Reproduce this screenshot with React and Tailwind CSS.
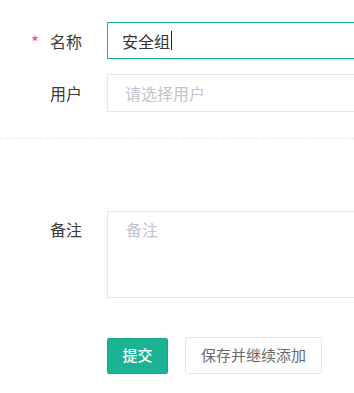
import React from 'react';

const font = { fontFamily: '"Noto Sans CJK SC", "Noto Sans", sans-serif' };

const Label = ({ children, required }) => (
  <div className="w-[82px] shrink-0 flex items-center justify-end text-[16px] text-[#3a3a3a]">
    {required && <span className="text-[#ed5565] text-[17px] leading-none mr-[11px] mt-[2px]">*</span>}
    {children}
  </div>
);

const App = () => {
  return (
    <div className="w-[354px] h-[393px] overflow-hidden bg-white" style={font}>
      <div className="w-[430px] pt-[22px]">
        {/* 名称 */}
        <div className="flex items-center">
          <Label required>名称</Label>
          <div className="ml-[25px] flex-1 h-[37px] border border-[#1ab394] flex items-center pl-[14px] text-[16px] text-[#333333]">
            安全组
            <span className="inline-block w-px h-[19px] bg-[#222] ml-[1px]" />
          </div>
        </div>

        {/* 用户 */}
        <div className="flex items-center mt-[15px]">
          <Label>用户</Label>
          <div className="ml-[25px] flex-1 h-[38px] border border-[#e5e6e7] flex items-center pl-[17px] text-[16px] text-[#c0c4cc]">
            请选择用户
          </div>
        </div>

        <div className="mt-[26px] border-t border-dashed border-[#e7eaec]" />

        {/* 备注 */}
        <div className="flex items-start mt-[72px]">
          <div className="w-[82px] shrink-0 pt-[6px] text-right text-[16px] text-[#3a3a3a]">备注</div>
          <div className="ml-[25px] flex-1 h-[87px] border border-[#e5e6e7] pl-[18px] pt-[5px] text-[16px] text-[#c0c4cc]">
            备注
          </div>
        </div>

        {/* 按钮 */}
        <div className="flex items-center mt-[39px] pl-[107px] gap-[17px]">
          <button className="w-[61px] h-[36px] bg-[#1ab394] border border-[#18a689] rounded-[2px] text-white text-[15px] font-medium">
            提交
          </button>
          <button className="w-[137px] h-[37px] bg-white border border-[#e1e3e6] rounded-[3px] text-[#676a6c] text-[15px]">
            保存并继续添加
          </button>
        </div>
      </div>
    </div>
  );
};

export default App;
